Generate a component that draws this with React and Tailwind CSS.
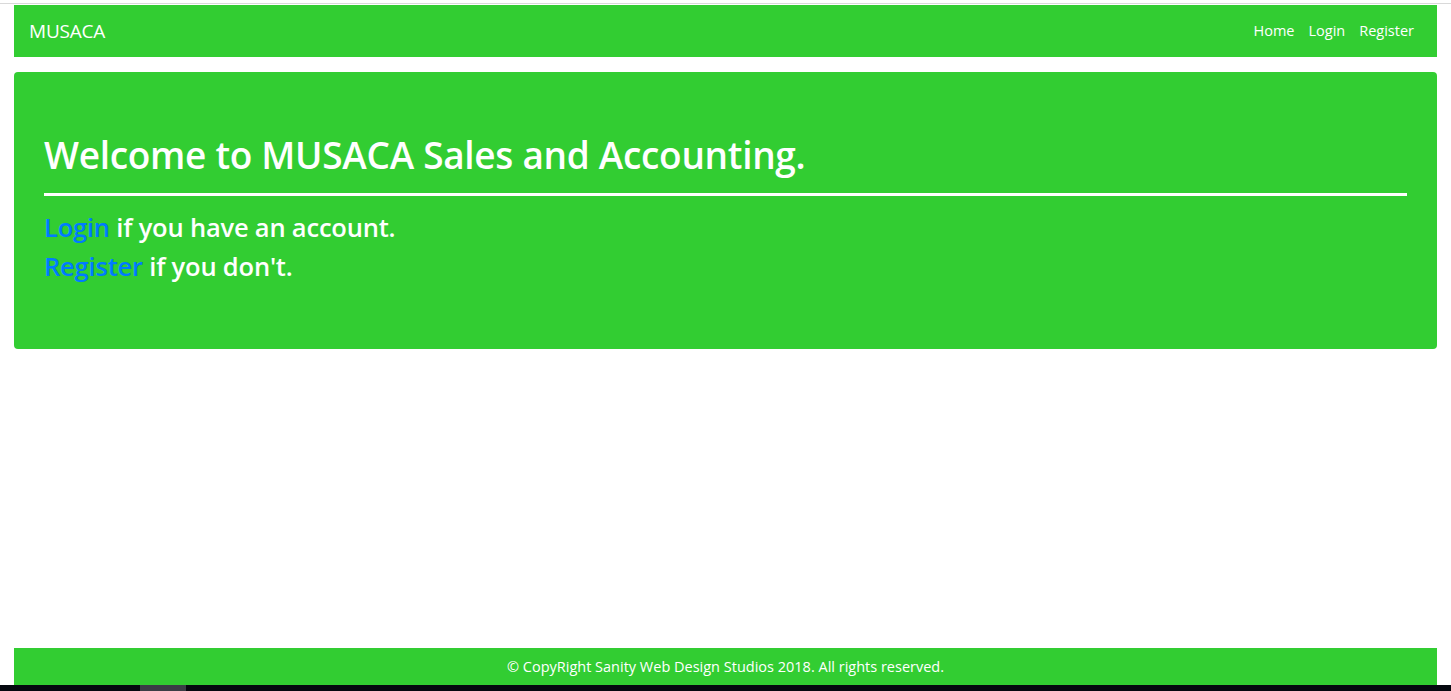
export default function App() {
  return (
    <div className="h-[691px] flex flex-col bg-white overflow-hidden" style={{ fontFamily: '"Open Sans", "Noto Sans", sans-serif' }}>
      {/* window edge */}
      <div className="h-[3px] shrink-0" />
      <div className="h-px bg-[#d9d9d9] shrink-0" />
      <div className="h-px shrink-0" />

      {/* NAVBAR */}
      <nav className="mx-[14px] h-[52px] shrink-0 bg-[#32cd32] flex items-center justify-between px-[15px]">
        <a href="#" className="text-white text-[19px] tracking-[-0.2px]">MUSACA</a>
        <ul className="flex items-center gap-[14px] pr-[8px] text-[14.5px] text-white">
          <li><a href="#">Home</a></li>
          <li><a href="#">Login</a></li>
          <li><a href="#">Register</a></li>
        </ul>
      </nav>

      {/* JUMBOTRON */}
      <main className="mx-[14px] mt-[15px] h-[277px] shrink-0 rounded-[4px] bg-[#32cd32] px-[30px] pt-[61px]">
        <h1 className="text-white text-[37px] font-semibold leading-[44px] tracking-[-0.3px]">
          Welcome to MUSACA Sales and Accounting.
        </h1>
        <hr className="mt-[16px] border-t-[3px] border-white" />
        <div className="mt-[12px] text-[25.5px] font-semibold leading-[39px] text-white tracking-[-0.2px]">
          <p><a href="#" className="text-[#007bff]">Login</a> if you have an account.</p>
          <p><a href="#" className="text-[#007bff]">Register</a> if you don't.</p>
        </div>
      </main>

      <div className="flex-1" />

      {/* FOOTER */}
      <footer className="mx-[14px] h-[37px] shrink-0 bg-[#32cd32] flex items-center justify-center text-[14.5px] text-white">
        © CopyRight Sanity Web Design Studios 2018. All rights reserved.
      </footer>

      {/* taskbar strip */}
      <div className="h-[6px] shrink-0 bg-[#05080f] flex">
        <div className="ml-[140px] w-[46px] bg-[#3a3d45]" />
      </div>
    </div>
  );
}
